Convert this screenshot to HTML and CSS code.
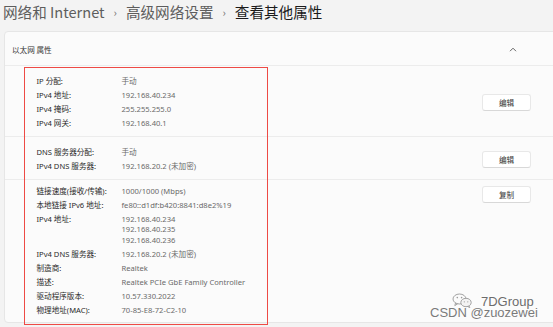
FILE: index.html
```html
<!DOCTYPE html>
<html lang="zh-CN">
<head>
	<meta charset="UTF-8">
	<title>查看其他属性</title>
	<link rel="stylesheet" href="styles.css">
</head>
<body>
	<div class="title">
		<span class="crumb">网络和 Internet</span>
		<span class="sep">›</span>
		<span class="crumb">高级网络设置</span>
		<span class="sep">›</span>
		<span class="crumb current">查看其他属性</span>
	</div>

	<div class="card">
		<div class="card-head">
			<span>以太网 属性</span>
			<svg class="chevron" width="8" height="5" viewBox="0 0 8 5"><polyline points="1,4.2 4,1.2 7,4.2" fill="none" stroke="#555" stroke-width="0.9"/></svg>
		</div>

		<div class="section s1">
			<div class="rows">
				<div class="row"><span class="label">IP 分配:</span><span class="value">手动</span></div>
				<div class="row"><span class="label">IPv4 地址:</span><span class="value">192.168.40.234</span></div>
				<div class="row"><span class="label">IPv4 掩码:</span><span class="value">255.255.255.0</span></div>
				<div class="row"><span class="label">IPv4 网关:</span><span class="value">192.168.40.1</span></div>
			</div>
			<button class="btn">编辑</button>
		</div>

		<div class="section s2">
			<div class="rows">
				<div class="row"><span class="label">DNS 服务器分配:</span><span class="value">手动</span></div>
				<div class="row"><span class="label">IPv4 DNS 服务器:</span><span class="value">192.168.20.2 (未加密)</span></div>
			</div>
			<button class="btn">编辑</button>
		</div>

		<div class="section s3">
			<div class="rows">
				<div class="row"><span class="label">链接速度(接收/传输):</span><span class="value">1000/1000 (Mbps)</span></div>
				<div class="row"><span class="label">本地链接 IPv6 地址:</span><span class="value">fe80::d1df:b420:8841:d8e2%19</span></div>
				<div class="row"><span class="label">IPv4 地址:</span><span class="value">192.168.40.234<br>192.168.40.235<br>192.168.40.236</span></div>
				<div class="row"><span class="label">IPv4 DNS 服务器:</span><span class="value">192.168.20.2 (未加密)</span></div>
				<div class="row"><span class="label">制造商:</span><span class="value">Realtek</span></div>
				<div class="row"><span class="label">描述:</span><span class="value">Realtek PCIe GbE Family Controller</span></div>
				<div class="row"><span class="label">驱动程序版本:</span><span class="value">10.57.330.2022</span></div>
				<div class="row"><span class="label">物理地址(MAC):</span><span class="value">70-85-E8-72-C2-10</span></div>
			</div>
			<button class="btn">复制</button>
		</div>

		<div class="mark"></div>
	</div>

	<div class="watermark">
		<div class="wm-top">
			<svg class="wechat" width="21" height="15" viewBox="0 0 21 15">
				<ellipse cx="7.5" cy="6" rx="6.5" ry="5" fill="none" stroke="#999" stroke-width="0.9"/>
				<path d="M3.5 10 L2.8 12.6 L5.6 10.9" fill="none" stroke="#999" stroke-width="0.9"/>
				<ellipse cx="14" cy="9.5" rx="5.2" ry="4.2" fill="#f3f3f3" stroke="#999" stroke-width="0.9"/>
				<path d="M17 13 L17.8 14.6 L15.6 13.5" fill="none" stroke="#999" stroke-width="0.9"/>
				<circle cx="5.3" cy="4.6" r="0.8" fill="#999"/>
				<circle cx="9.6" cy="4.6" r="0.8" fill="#999"/>
				<circle cx="12.3" cy="8.8" r="0.6" fill="#999"/>
				<circle cx="15.8" cy="8.8" r="0.6" fill="#999"/>
			</svg>
			<span>7DGroup</span>
		</div>
		<div class="wm-csdn">CSDN @zuozewei</div>
	</div>
</body>
</html>
```

FILE: styles.css
```css
*{
	margin: 0;
	padding: 0;
	box-sizing: border-box;
}
html,body{
	width: 553px;
	height: 327px;
	overflow: hidden;
}
body{
	background-color: #f3f3f3;
	font-family: "Noto Sans", "Noto Sans CJK SC", sans-serif;
	color: #1b1b1b;
	position: relative;
}
.title{
	height: 31px;
	padding-left: 3px;
	display: flex;
	align-items: flex-start;
	font-family: "Noto Sans CJK SC", "Noto Sans", sans-serif;
	font-size: 14.6px;
	line-height: 24px;
	color: #5d5d5d;
}
.title .sep{
	font-size: 11px;
	margin: 0 9px 0 9px;
	color: #707070;
}
.title .current{
	color: #1a1a1a;
}

.card{
	position: relative;
	margin-left: 4px;
	width: 560px;
	background-color: #fbfbfb;
	border: 1px solid #e6e6e6;
	border-radius: 4px;
	font-size: 7.6px;
}
.card-head{
	height: 34px;
	padding: 1px 46px 0 7px;
	display: flex;
	align-items: center;
	justify-content: space-between;
	border-bottom: 1px solid #ececec;
	font-family: "Noto Sans CJK SC", sans-serif;
	color: #333;
	font-size: 7.6px;
}
.chevron{
	display: block;
}

.section{
	display: flex;
	align-items: center;
	justify-content: space-between;
	padding: 10px 32px 7.5px 31.5px;
	border-bottom: 1px solid #ececec;
}
.section.s3{
	align-items: flex-start;
	padding-top: 6px;
	padding-bottom: 6px;
	border-bottom: none;
}
.rows{
	display: flex;
	flex-direction: column;
	gap: 3.8px;
}
.row{
	display: grid;
	grid-template-columns: 85px auto;
	line-height: 10.3px;
}
.label{
	color: #2a2a2a;
}
.value{
	color: #6a6a6a;
}
.btn{
	width: 49px;
	height: 17px;
	background-color: #fff;
	border: 1px solid #e8e8e8;
	border-bottom-color: #d8d8d8;
	border-radius: 3px;
	font-family: "Noto Sans CJK SC", sans-serif;
	font-size: 7.6px;
	color: #333;
}

.mark{
	position: absolute;
	left: 19px;
	top: 35px;
	width: 244px;
	height: 258px;
	border: 1.5px solid #ee4a45;
}

.watermark{
	position: absolute;
	left: 430px;
	top: 297px;
	font-family: "Liberation Sans", Arial, sans-serif;
	font-size: 13px;
	color: #6c6c6c;
	text-shadow: 0 0 2px #fff, 0 0 1px #fff;
}
.wm-top{
	display: flex;
	align-items: center;
	margin-left: 22px;
	gap: 8px;
	height: 10px;
	line-height: 10px;
}
.wechat{
	display: block;
	margin-top: -4px;
}
.wm-csdn{
	line-height: 12px;
	margin-top: 0;
	color: #7a7a7a;
}
```
